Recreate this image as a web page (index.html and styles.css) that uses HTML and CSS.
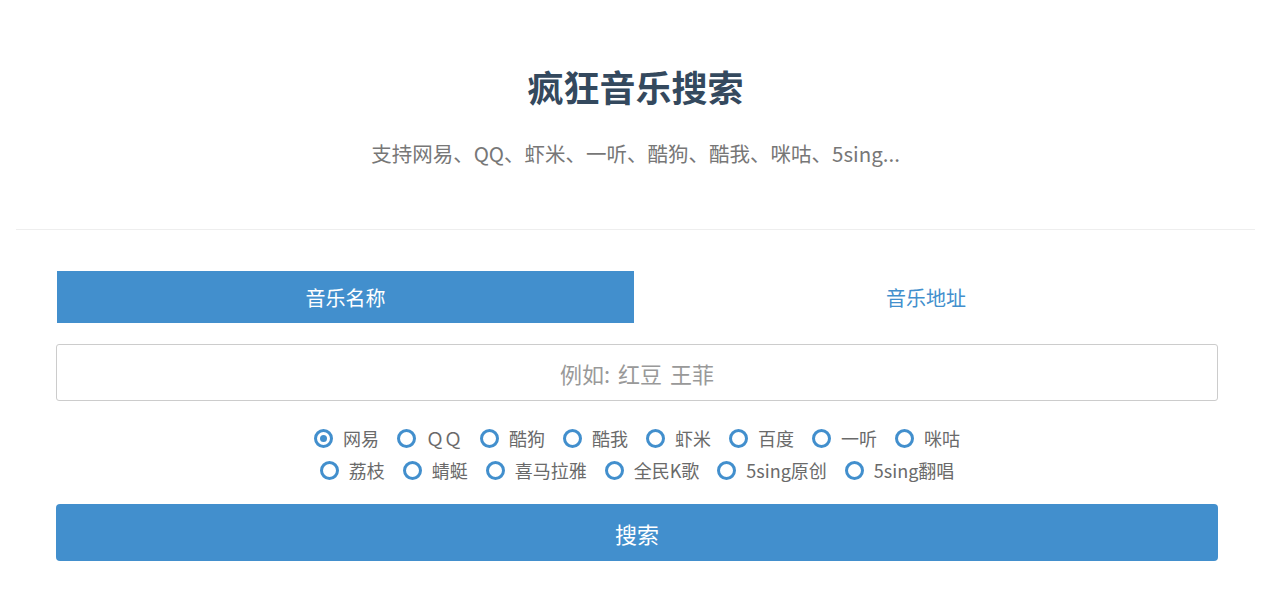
FILE: index.html
```html
<!DOCTYPE html>
<html lang="zh-CN">
<head>
<meta charset="utf-8">
<title>疯狂音乐搜索</title>
<link rel="stylesheet" href="styles.css">
</head>
<body>
<div class="page">
  <header class="header">
    <h1 class="title">疯狂音乐搜索</h1>
    <p class="subtitle">支持网易、QQ、虾米、一听、酷狗、酷我、咪咕、5sing...</p>
  </header>
  <div class="divider"></div>
  <form class="form">
    <div class="tabs">
      <div class="tab tab-active">音乐名称</div>
      <div class="tab">音乐地址</div>
    </div>
    <input class="input" type="text" placeholder="例如: 红豆 王菲">
    <div class="radios">
      <div class="radio-row">
        <label class="radio"><span class="dot checked"></span>网易</label>
        <label class="radio"><span class="dot"></span>ＱＱ</label>
        <label class="radio"><span class="dot"></span>酷狗</label>
        <label class="radio"><span class="dot"></span>酷我</label>
        <label class="radio"><span class="dot"></span>虾米</label>
        <label class="radio"><span class="dot"></span>百度</label>
        <label class="radio"><span class="dot"></span>一听</label>
        <label class="radio"><span class="dot"></span>咪咕</label>
      </div>
      <div class="radio-row">
        <label class="radio"><span class="dot"></span>荔枝</label>
        <label class="radio"><span class="dot"></span>蜻蜓</label>
        <label class="radio"><span class="dot"></span>喜马拉雅</label>
        <label class="radio"><span class="dot"></span>全民K歌</label>
        <label class="radio"><span class="dot"></span>5sing原创</label>
        <label class="radio"><span class="dot"></span>5sing翻唱</label>
      </div>
    </div>
    <button class="button" type="button">搜索</button>
  </form>
</div>
</body>
</html>
```
FILE: styles.css
```css
* { box-sizing: border-box; }
html, body { margin: 0; padding: 0; background: #fff; }
body {
  font-family: "Noto Sans CJK SC", "Noto Sans", sans-serif;
  color: #666;
}
.page {
  padding: 0 8px 0 16px;
}
.header {
  text-align: center;
  padding-top: 60px;
  padding-bottom: 62px;
}
.title {
  margin: 0;
  font-size: 36px;
  line-height: 52px;
  font-weight: 700;
  color: #34495e;
}
.subtitle {
  margin: 27px 0 0;
  font-size: 20.5px;
  line-height: 28px;
  color: #777;
}
.divider {
  height: 1px;
  background: #eee;
}
.form {
  margin: 41px 37px 0 40px;
  display: flex;
  flex-direction: column;
}
.tabs {
  display: flex;
  height: 52px;
  padding-left: 1px;
}
.tab {
  flex: 1;
  display: flex;
  align-items: center;
  justify-content: center;
  font-size: 20px;
  color: #428fcd;
}
.tab-active {
  flex: 0 0 577px;
  background: #428fcd;
  color: #fff;
}
.input {
  margin-top: 21px;
  height: 57px;
  border: 1px solid #ccc;
  border-radius: 3px;
  font-family: inherit;
  font-size: 22px;
  word-spacing: 3px;
  text-align: center;
  color: #555;
  outline: none;
}
.input::placeholder { color: #999; }
.radios {
  margin-top: 24px;
  display: flex;
  flex-direction: column;
  align-items: center;
  gap: 6px;
}
.radio-row {
  display: flex;
  gap: 18px;
  height: 26px;
  align-items: center;
}
.radio {
  display: flex;
  align-items: center;
  gap: 10px;
  font-size: 18px;
  color: #6a6a6a;
  line-height: 26px;
}
.dot {
  width: 19px;
  height: 19px;
  border: 3px solid #428fcd;
  border-radius: 50%;
  display: flex;
  align-items: center;
  justify-content: center;
}
.dot.checked::after {
  content: "";
  width: 7px;
  height: 7px;
  border-radius: 50%;
  background: #428fcd;
}
.button {
  margin-top: 21px;
  height: 57px;
  border: none;
  border-radius: 4px;
  background: #428fcd;
  color: #fff;
  font-family: inherit;
  font-size: 22px;
}
```
